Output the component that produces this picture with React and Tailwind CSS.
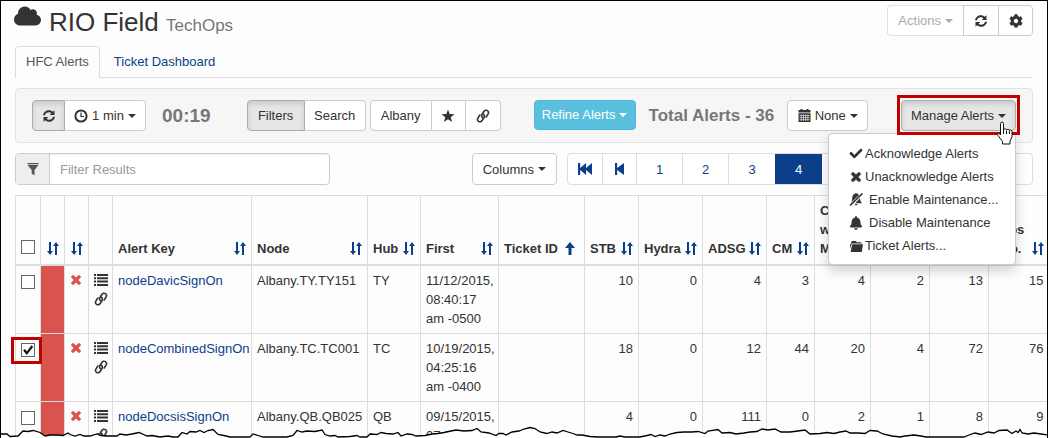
import React from "react";
import { FaCloud, FaCog, FaCheck, FaBell } from "react-icons/fa";

const Caret = () => (
  <svg viewBox="0 0 8 4" className="ml-1 inline-block h-1 w-2 shrink-0" fill="currentColor" aria-hidden="true">
    <path d="M0 0h8L4 4z" />
  </svg>
);

const Refresh = ({ className }) => (
  <svg viewBox="0 0 14 14" className={className} fill="currentColor" aria-hidden="true">
    <path d="M1 6.2C1.4 3.3 3.9 1.2 7 1.2c1.500 0 2.900.6 3.900 1.500L12.500 1.200V6H7.700l1.700-1.800A3.700 3.700 0 0 0 7 3.200C5 3.200 3.400 4.400 3 6.200z" />
    <path d="M13 7.800c-.4 2.900-2.900 5-6 5-1.500 0-2.900-.6-3.900-1.500L1.500 12.800V8h4.800L4.600 9.800A3.700 3.700 0 0 0 7 10.800c2 0 3.600-1.200 4-3z" />
  </svg>
);

const Clock = () => (
  <svg viewBox="0 0 14 14" className="mr-1 h-3.5 w-3.5 shrink-0" fill="none" stroke="currentColor" aria-hidden="true">
    <circle cx="7" cy="7" r="5.600" strokeWidth="2" />
    <path d="M7 3.500V7.500H10" strokeWidth="1.200" />
  </svg>
);

const Star = () => (
  <svg viewBox="0 0 14 14" className="h-3.5 w-3.5" fill="currentColor" aria-hidden="true">
    <path d="M7 .5l1.700 4.600 4.900.1-3.900 3 1.400 4.800L7 10.200 2.900 13l1.400-4.800-3.900-3 4.900-.1z" />
  </svg>
);

const LinkIcon = () => (
  <svg viewBox="0 0 14 14" className="h-3.5 w-3.5" fill="none" stroke="currentColor" strokeWidth="1.600" strokeLinecap="round" aria-hidden="true">
    <path d="M6.800 8.800C5.600 8.200 5.200 6.600 6.100 5.300L7.900 2.500C8.700 1.200 10.200.8 11.400 1.600 12.600 2.400 12.800 3.900 12 5.200L10.200 8" />
    <path d="M7.200 5.200C8.400 5.800 8.800 7.400 7.900 8.700L6.100 11.500C5.300 12.800 3.800 13.200 2.600 12.400 1.400 11.600 1.200 10.100 2 8.800L3.800 6" />
  </svg>
);

const Calendar = () => (
  <svg viewBox="0 0 13 13" className="mr-1 h-[13px] w-[13px] shrink-0" aria-hidden="true">
    <path fill="currentColor" d="M.5 1H2.500V0h2v1h4V0h2v1h2v2.500H.5zM.5 4.200h12V13H.5z" />
    <path stroke="#fff" strokeWidth=".6" d="M1.500 6.500h10M1.500 8.600h10M1.500 10.700h10M3.300 5.500V12M5.500 5.500V12M7.700 5.500V12M9.900 5.500V12" />
  </svg>
);

const Funnel = () => (
  <svg viewBox="0 0 12 13" className="h-[13px] w-3" fill="currentColor" aria-hidden="true">
    <path d="M.5 0h11v1.200H.5zM.5 2h11L7.500 7v5.500L4.700 10.500V7z" />
  </svg>
);

const Cross = ({ className }) => (
  <svg viewBox="0 0 12 12" className={className} fill="currentColor" aria-hidden="true">
    <path d="M3 .8L6 3.600 9 .8 11.200 3 8.400 6l2.800 3L9 11.200 6 8.400l-3 2.800L.8 9l2.800-3L.8 3z" />
  </svg>
);

const ListIcon = () => (
  <svg viewBox="0 0 14 12" className="h-3 w-3.5" fill="currentColor" aria-hidden="true">
    <path d="M0 0h2v2H0zM3 0h11v2H3zM0 3.300h2v2H0zM3 3.300h11v2H3zM0 6.600h2v2H0zM3 6.600h11v2H3zM0 10h2v2H0zM3 10h11v2H3z" />
  </svg>
);

const Sort = () => (
  <svg viewBox="0 0 12 13" className="h-[13px] w-3 shrink-0 text-[#0b3f8a]" fill="currentColor" aria-hidden="true">
    <path d="M2 0h2v9h2L3 13 0 9h2zM8 13h2V4h2L9 0 6 4h2z" />
  </svg>
);

const SortUp = () => (
  <svg viewBox="0 0 10 13" className="mr-1 h-[13px] w-2.5 shrink-0 text-[#0b3f8a]" fill="currentColor" aria-hidden="true">
    <path d="M5 0l5 6H6.500v7h-3V6H0z" />
  </svg>
);

const BellOff = () => (
  <svg viewBox="0 0 14 13" className="h-[13px] w-3.5" fill="currentColor" aria-hidden="true">
    <path d="M6.500.3C8 .3 9.300.9 10 1.900L2.300 9.500C2.900 8.400 3.200 7.200 3.200 5.600 3.200 2.800 4.500.8 6.500.3z" />
    <path d="M11 5.300C11.200 7.600 11.800 8.900 13 10.200H6.200zM5.500 11h3.200L7.100 12.700z" />
    <path d="M12.800 0L14 1.100 1.700 13 .4 12z" />
  </svg>
);

const Folder = () => (
  <svg viewBox="0 0 14 12" className="h-3 w-3.5" fill="currentColor" aria-hidden="true">
    <path d="M2 2.800L3 1h4l.8 1.200H12.500V3.500H2.600L1.500 9 1 4h1zM3.200 4.300H14L12.800 12H1.600z" />
  </svg>
);

const Rewind = ({ fast }) => (
  <svg viewBox={fast ? "0 0 14 12" : "0 0 9 12"} className={fast ? "h-3 w-3.5" : "h-3 w-[9px]"} fill="currentColor" aria-hidden="true">
    {fast ? <path d="M0 0h2.200v5L8 0v5l6-5v12L8 7v5L2.200 7v5H0z" /> : <path d="M0 0h2.200v5L9 0v12L2.200 7v5H0z" />}
  </svg>
);

const Pointer = () => (
  <svg viewBox="0 0 18 24" className="pointer-events-none absolute left-[95px] top-[21px] z-30 h-6 w-[18px]" aria-hidden="true">
    <path
      d="M4.500 14V2.500C4.500.6 7.500.6 7.500 2.500V9c0-1.600 2.800-1.600 3 .2.300-1.400 2.800-1.200 2.900.4.400-1.100 2.600-.9 2.600.8V16l-2 4v3H6.500v-2.500L2 14.500C.6 12.500 2.500 11.200 4.500 14z"
      fill="#fff"
      stroke="#111"
    />
    <path d="M7.500 9v4M10.500 9.500V13M13.400 10v3" stroke="#111" />
  </svg>
);

const btn = "flex h-[31px] items-center justify-center border border-[#ccc] bg-white text-[#333]";
const pressed = "flex h-[31px] items-center justify-center border border-[#adadad] bg-[#e6e6e6] text-[#333] shadow-[inset_0_3px_5px_rgba(0,0,0,0.125)]";

const columns = [
  { label: "", width: 24 },
  { label: "", width: 24 },
  { label: null, width: 24 },
  { label: "Alert Key", width: 139 },
  { label: "Node", width: 116 },
  { label: "Hub", width: 53 },
  { label: "First", width: 78 },
  { label: "Ticket ID", width: 86, up: true },
  { label: "STB", width: 54 },
  { label: "Hydra", width: 64 },
  { label: "ADSG", width: 64 },
  { label: "CM", width: 48 },
  { label: "CM w/ M", width: 56, stacked: true },
  { label: "", width: 59 },
  { label: "", width: 59 },
  { label: "Grps Info.", width: 60 },
];

const rows = [
  { key: "nodeDavicSignOn", node: "Albany.TY.TY151", hub: "TY", first: "11/12/2015, 08:40:17 am -0500", n: [10, 0, 4, 3, 4, 2, 13, 15] },
  { key: "nodeCombinedSignOn", node: "Albany.TC.TC001", hub: "TC", first: "10/19/2015, 04:25:16 am -0400", n: [18, 0, 12, 44, 20, 4, 72, 76], checked: true },
  { key: "nodeDocsisSignOn", node: "Albany.QB.QB025", hub: "QB", first: "09/15/2015, 07:30:08 am -0400", n: [4, 0, 111, 0, 2, 1, 8, 9] },
];

const Tick = ({ label, checked }) => (
  <span className="relative block h-3.5 w-3.5">
    <input
      type="checkbox"
      aria-label={label}
      defaultChecked={checked}
      className="peer block h-3.5 w-3.5 appearance-none border border-[#666] bg-white"
    />
    <svg viewBox="0 0 14 14" className="pointer-events-none absolute inset-0 hidden h-3.5 w-3.5 peer-checked:block" fill="none" stroke="#111" strokeWidth="2.200" aria-hidden="true">
      <path d="M3 6.800l2.800 3.500L11.300 3" />
    </svg>
  </span>
);

const TORN =
  "0,14 7,14 10,16.500 18,16 23,11 28,11.500 33,10.500 40,12.500 45,16 50,15 57,15 63,15.500 68,13 70,14.500 75,16 80,14.500 84,16 90,16 97,14 101,15.500 107,16 117,16 120,14 126,15 132,14 139,12.500 147,16 152,15.500 160,17 168,16 173,17 178,17 182,12.500 187,14 190,11.500 196,12 200,10.500 204,12.500 208,10.500 213,9.500 218,14.500 224,15.500 230,17 250,17 253,14 258,15.500 263,17 287,17 293,15.500 297,10.500 302,12 307,11 315,11.500 322,10 325,14.500 330,16 335,15.500 338,17 350,16.500 357,15.500 360,17 367,17 370,14 377,14.500 381,12.500 386,13.500 393,14 398,12.500 401,16 407,14 412,14.500 416,16 425,15.500 432,14 438,13.500 444,12.500 451,11 456,10 464,11 472,10.500 477,8.500 481,12 489,13 496,15.500 499,13.500 503,13.500 506,15 512,12 519,11 524,9 530,7.500 535,8.500 540,12 547,13.500 552,12 557,13 563,10.500 568,12 573,13.500 577,15 582,15 590,16.500 597,17 616,17 620,16 625,17 640,17 647,15.500 651,14.500 655,16.500 660,15 665,16 670,14 677,12.500 684,12 692,12 698,11.500 705,13.500 708,11 718,9.500 722,13 730,12.500 736,14 744,13 750,12 757,11.500 762,9 768,10 775,9 781,12 790,12 798,11 805,10 810,14 820,13.500 827,12.500 834,13.500 840,12 846,11 850,13 858,13 865,13.500 870,10.500 877,11 883,14 892,16 900,17 905,16 914,15 921,16 926,17 964,17 969,15 975,13 981,14.500 988,12 994,13 999,10.500 1007,10 1012,13.500 1016,11 1018,12.500 1020,9.500 1022,13 1028,14 1034,13 1041,14 1048,15";

export default function App() {
  return (
    <div className="relative h-screen overflow-hidden border-x border-t border-black bg-[#fdfdfd] pl-3.5 font-['Liberation_Sans',Arial,sans-serif] text-[13px] leading-[19px] text-[#333]">
      <header className="mr-3.5 flex h-[45px] items-start justify-between">
        <h1 className="flex items-start text-[26px] leading-[42px]">
          <FaCloud className="-ml-px mt-0.5 h-[26px] w-[27px]" aria-hidden="true" />
          <span className="ml-2">
            RIO Field <small className="text-[17px] text-[#777]">TechOps</small>
          </span>
        </h1>
        <div className="mt-1 flex">
          <button type="button" disabled className="flex h-[31px] items-center rounded-l border border-r-0 border-[#e2e2e2] bg-white px-2.5 text-[#aaa]">
            Actions<Caret />
          </button>
          <button type="button" aria-label="Refresh" className={btn + " w-9"}><Refresh className="h-3.5 w-3.5" /></button>
          <button type="button" aria-label="Settings" className={btn + " -ml-px w-[35px] rounded-r"}><FaCog className="h-3.5 w-3.5" /></button>
        </div>
      </header>

      <nav className="mr-3.5 flex h-8 border-b border-[#ddd]">
        <a href="#alerts" aria-current="page" className="-mb-px flex items-center rounded-t border border-b-0 border-[#ddd] bg-[#fdfdfd] px-2.5 pb-0.5 text-[#555]">HFC Alerts</a>
        <a href="#tickets" className="flex items-center px-3.5 text-[#0b3f8a]">Ticket Dashboard</a>
      </nav>

      <section className="relative z-20 mr-3.5 mt-2.5 flex h-[55px] items-center rounded border border-[#e3e3e3] bg-[#f6f6f6] px-4">
        <div className="flex">
          <button type="button" aria-label="Auto refresh" className={pressed + " w-[33px] rounded-l"}><Refresh className="h-3.5 w-3.5" /></button>
          <button type="button" className={btn + " w-[81px] rounded-r border-l-0"}><Clock />1 min<Caret /></button>
        </div>
        <strong className="ml-4 text-[19px] text-[#777]">00:19</strong>
        <div className="ml-9 flex">
          <button type="button" className={pressed + " w-[58px] rounded-l"}>Filters</button>
          <button type="button" className={btn + " w-[61px] rounded-r border-l-0"}>Search</button>
        </div>
        <div className="ml-1 flex">
          <button type="button" className={btn + " w-[62px] rounded-l"}>Albany</button>
          <button type="button" aria-label="Favorite" className={btn + " w-[34px] border-l-0"}><Star /></button>
          <button type="button" aria-label="Link" className={btn + " w-[35px] rounded-r border-l-0"}><LinkIcon /></button>
        </div>
        <button type="button" className="mb-0.5 ml-[33px] flex h-[30px] w-[102px] items-center justify-center rounded-sm border border-[#46b8da] bg-[#5bc0de] text-white">Refine Alerts<Caret /></button>
        <strong className="ml-[13px] whitespace-nowrap text-[17px] text-[#777]">Total Alerts - 36</strong>
        <button type="button" className={btn + " ml-[13px] w-[81px] rounded"}><Calendar />None<Caret /></button>
        <div className="relative ml-auto">
          <button type="button" aria-haspopup="menu" aria-expanded="true" className={pressed + " w-[115px] rounded"}>Manage Alerts<Caret /></button>
          <div className="pointer-events-none absolute -inset-x-1 -bottom-1 -top-[5px] z-20 border-[3px] border-[#c00000]" />
          <ul className="absolute right-0 top-[33px] z-10 flex w-[188px] flex-col gap-1 rounded border border-[#ccc] bg-white pb-[9px] pl-5 pt-2.5 shadow-[0_6px_12px_rgba(0,0,0,0.175)]">
            {[
              [<FaCheck className="h-[13px] w-3.5" />, "Acknowledge Alerts", "gap-0.5"],
              [<Cross className="h-3 w-3.5" />, "Unacknowledge Alerts", "gap-0.5"],
              [<BellOff />, "Enable Maintenance...", "gap-1.5"],
              [<FaBell className="h-3.5 w-3.5" />, "Disable Maintenance", "gap-1.5"],
              [<Folder />, "Ticket Alerts...", "gap-0.5"],
            ].map(([icon, text, gap]) => (
              <li key={text}>
                <a href="#manage" className={"flex items-center whitespace-nowrap " + gap}>{icon}{text}</a>
              </li>
            ))}
          </ul>
          <Pointer />
        </div>
      </section>

      <div className="mr-3.5 mt-2.5 flex h-8 items-stretch">
        <label className="flex w-[315px] overflow-hidden rounded border border-[#ccc] bg-white">
          <span className="flex w-[34px] items-center justify-center border-r border-[#ccc] bg-[#eee] text-[#555]"><Funnel /></span>
          <input type="text" aria-label="Filter Results" placeholder="Filter Results" className="min-w-0 flex-1 px-2.5 shadow-[inset_0_1px_1px_rgba(0,0,0,0.075)] outline-none placeholder:text-[#999]" />
        </label>
        <button type="button" className="ml-auto flex items-center rounded border border-[#ccc] bg-white px-2.5">Columns<Caret /></button>
        <div className="ml-2.5 flex w-[466px] overflow-hidden rounded border border-[#ddd] bg-white text-[#0b3f8a]">
          <button type="button" aria-label="First page" className="flex w-[35px] items-center justify-center border-r border-[#ddd]"><Rewind fast /></button>
          <button type="button" aria-label="Previous page" className="flex w-[34px] items-center justify-center border-r border-[#ddd]"><Rewind /></button>
          <button type="button" className="w-[46px] border-r border-[#ddd]">1</button>
          <button type="button" className="w-[46px] border-r border-[#ddd]">2</button>
          <button type="button" className="w-[46px]">3</button>
          <button type="button" aria-current="page" className="-my-px w-[47px] bg-[#0b3f8a] text-white">4</button>
        </div>
      </div>

      <table className="mt-2.5 w-full table-fixed border-collapse">
        <colgroup>
          <col style={{ width: 25 }} />
          {columns.map((c, i) => <col key={i} style={{ width: c.width }} />)}
        </colgroup>
        <thead>
          <tr className="h-[69px] align-bottom">
            <th className="border border-b-2 border-[#ddd] px-[5px] pb-2.5"><Tick label="Select all" /></th>
            {columns.map((c, i) => (
              <th key={i} className={"border border-b-2 border-[#ddd] px-[5px] pb-1.5 text-left " + (i === 15 ? "border-r-0" : "")}>
                <div className="flex items-end justify-between">
                  <span className={c.stacked ? "w-5" : ""}>{c.label}</span>
                  {c.label !== null && <span className="flex h-[19px] items-center">{c.up ? <SortUp /> : <Sort />}</span>}
                </div>
              </th>
            ))}
          </tr>
        </thead>
        <tbody className="[&_td]:border [&_td]:border-[#ddd] [&_td]:p-[5px] [&_td]:align-top">
          {rows.map((r) => (
            <tr key={r.key} className="h-[68px]">
              <td>
                <div className="relative mt-1">
                  <Tick label={"Select " + r.key} checked={r.checked} />
                  {r.checked && <div className="pointer-events-none absolute -left-2.5 -top-1.5 h-[27px] w-[31px] border-3 border-[#c00000]" />}
                </div>
              </td>
              <td className="bg-[#d9534f]" />
              <td><Cross className="mt-[3px] h-3 w-3 text-[#d9534f]" /></td>
              <td>
                <div className="flex flex-col gap-1.5 pt-[3px]"><ListIcon /><LinkIcon /></div>
              </td>
              <td><a href="#alert" className="text-[#0b3f8a]">{r.key}</a></td>
              <td>{r.node}</td>
              <td>{r.hub}</td>
              <td>{r.first}</td>
              <td />
              {r.n.map((v, i) => <td key={i} className={"text-right" + (i === 7 ? " border-r-0!" : "")}>{v}</td>)}
            </tr>
          ))}
        </tbody>
      </table>

      <svg viewBox="0 0 1048 18" preserveAspectRatio="none" className="absolute -inset-x-px bottom-0 z-30 h-[18px] w-[calc(100%+2px)]" aria-hidden="true">
        <polygon points={TORN + " 1048,18 0,18"} fill="#fff" />
        <polyline points={TORN} fill="none" stroke="#000" strokeWidth="1.300" />
      </svg>
    </div>
  );
}
